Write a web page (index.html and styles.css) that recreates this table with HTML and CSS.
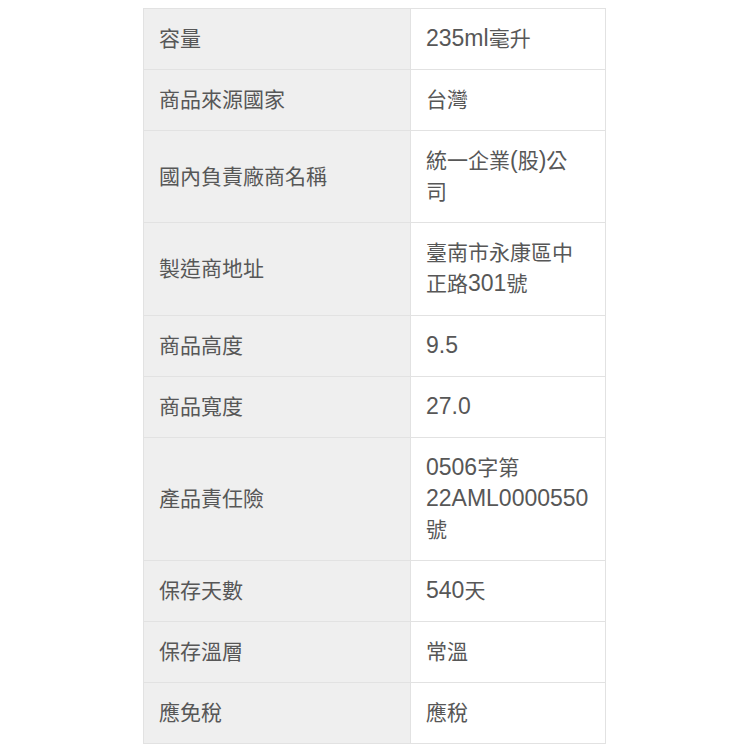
FILE: index.html
```html
<!DOCTYPE html>
<html lang="zh-Hant">
<head>
<meta charset="utf-8">
<title>商品規格</title>
<link rel="stylesheet" href="styles.css">
</head>
<body>
<table class="spec">
  <tr><th>容量</th><td><span class="lat">235ml</span>毫升</td></tr>
  <tr><th>商品來源國家</th><td>台灣</td></tr>
  <tr><th>國內負責廠商名稱</th><td>統一企業<span class="lat">(</span>股<span class="lat">)</span>公<br>司</td></tr>
  <tr><th>製造商地址</th><td>臺南市永康區中正路<span class="lat">301</span>號</td></tr>
  <tr><th>商品高度</th><td><span class="lat">9.5</span></td></tr>
  <tr><th>商品寬度</th><td><span class="lat">27.0</span></td></tr>
  <tr><th>產品責任險</th><td><span class="lat">0506</span>字第<span class="lat">22AML0000550</span>號</td></tr>
  <tr><th>保存天數</th><td><span class="lat">540</span>天</td></tr>
  <tr><th>保存溫層</th><td>常溫</td></tr>
  <tr><th>應免稅</th><td>應稅</td></tr>
</table>
</body>
</html>
```
FILE: styles.css
```css
html, body {
  margin: 0;
  background: #ffffff;
}
body {
  padding-top: 8px;
  font-family: "Liberation Sans", "Noto Sans CJK TC", sans-serif;
}
.spec {
  border-collapse: collapse;
  margin: 0 0 0 143px;
  width: 463px;
  table-layout: fixed;
  font-size: 21px;
  line-height: 31.1px;
  color: #575757;
}
.spec th,
.spec td {
  border: 1px solid #e2e2e2;
  padding: 14px 15px 15px;
  text-align: left;
  vertical-align: middle;
  font-weight: normal;
}
.spec th {
  width: 236px;
  background: #efefef;
}
.spec td {
  background: #ffffff;
}
.lat {
  font-size: 23px;
  line-height: 29px;
}
```
